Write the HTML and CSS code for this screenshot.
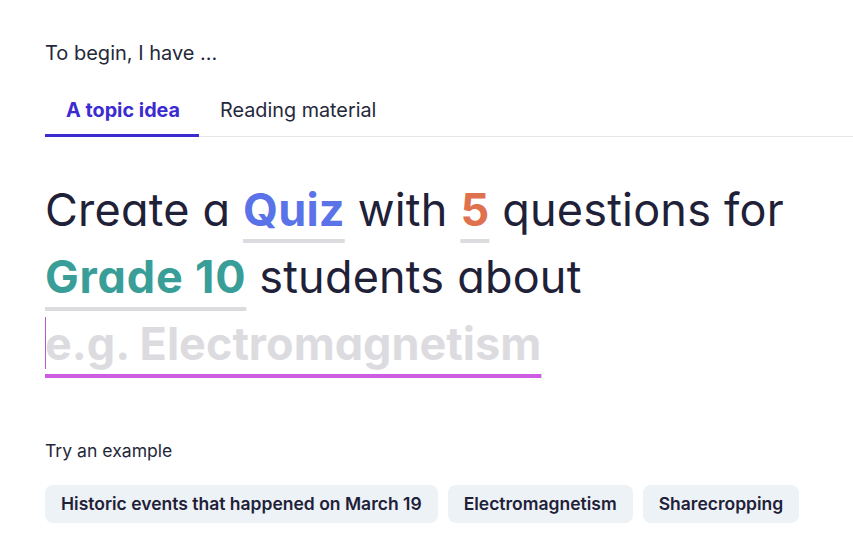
FILE: index.html
```html
<!DOCTYPE html>
<html>
<head>
<meta charset="utf-8">
<link rel="stylesheet" href="styles.css">
</head>
<body>
<main class="page">
  <p class="intro">To begin, I have ...</p>
  <nav class="tabs">
    <div class="tab active">A topic idea</div>
    <div class="tab">Reading material</div>
  </nav>
  <div class="prompt">
    <div class="line">Create a <span class="pick quiz">Quiz</span> with <span class="pick num">5</span> questions for</div>
    <div class="line"><span class="pick grade">Grade 10</span> students about</div>
    <div class="line"><span class="topic"><span class="caret"></span>e.g. Electromagnetism</span></div>
  </div>
  <p class="try">Try an example</p>
  <div class="chips">
    <span class="chip">Historic events that happened on March 19</span>
    <span class="chip">Electromagnetism</span>
    <span class="chip">Sharecropping</span>
  </div>
</main>
</body>
</html>
```
FILE: styles.css
```css
* { box-sizing: border-box; }
html, body { margin: 0; padding: 0; background: #ffffff; }
body {
  font-family: Inter, "Noto Sans", sans-serif;
  color: #1f2138;
  overflow: hidden;
}
.page {
  padding: 39px 0 0 45px;
}
.intro {
  margin: 0;
  font-size: 20px;
  line-height: 28px;
  color: #25283a;
}
.tabs {
  display: flex;
  margin-top: 31px;
  border-bottom: 1px solid #e6e7eb;
}
.tab {
  font-size: 19.8px;
  line-height: 24px;
  padding: 0 19px 12px 21px;
  color: #25283a;
  border-bottom: 3px solid transparent;
  margin-bottom: -1px;
}
.tab.active {
  color: #3b2bd1;
  font-weight: 700;
  border-bottom-color: #3b2bd1;
}
.tab + .tab {
  padding-left: 21px;
}
.prompt {
  margin-top: 39px;
  font-size: 45px;
  line-height: 67px;
  letter-spacing: 0.2px;
  font-feature-settings: "cv11";
}
.line { white-space: nowrap; }
.pick {
  font-weight: 700;
  text-decoration: underline;
  text-decoration-thickness: 4px;
  text-underline-offset: 13px;
  text-decoration-color: #dcdce0;
  text-decoration-skip-ink: none;
}
.quiz { color: #5b73e8; }
.num { color: #e0714f; }
.grade {
  color: #3a9e98;
  letter-spacing: 0.8px;
  text-underline-offset: 14px;
}
.topic {
  position: relative;
  display: inline-block;
  font-weight: 700;
  letter-spacing: 0;
  color: #dcdce0;
  text-decoration: underline;
  text-decoration-thickness: 4px;
  text-underline-offset: 14px;
  text-decoration-color: #cc5ce0;
  text-decoration-skip-ink: none;
}
.caret {
  position: absolute;
  left: 0;
  top: 7px;
  width: 1px;
  height: 52px;
  background: #b45ad0;
}
.try {
  margin: 62px 0 0 0;
  font-size: 17.6px;
  line-height: 24px;
  color: #25283a;
}
.chips {
  display: flex;
  gap: 10px;
  margin-top: 22px;
}
.chip {
  background: #edf2f7;
  border-radius: 8px;
  padding: 8px 16px;
  font-size: 17.5px;
  line-height: 22px;
  font-weight: 600;
  color: #1f2138;
}
```
